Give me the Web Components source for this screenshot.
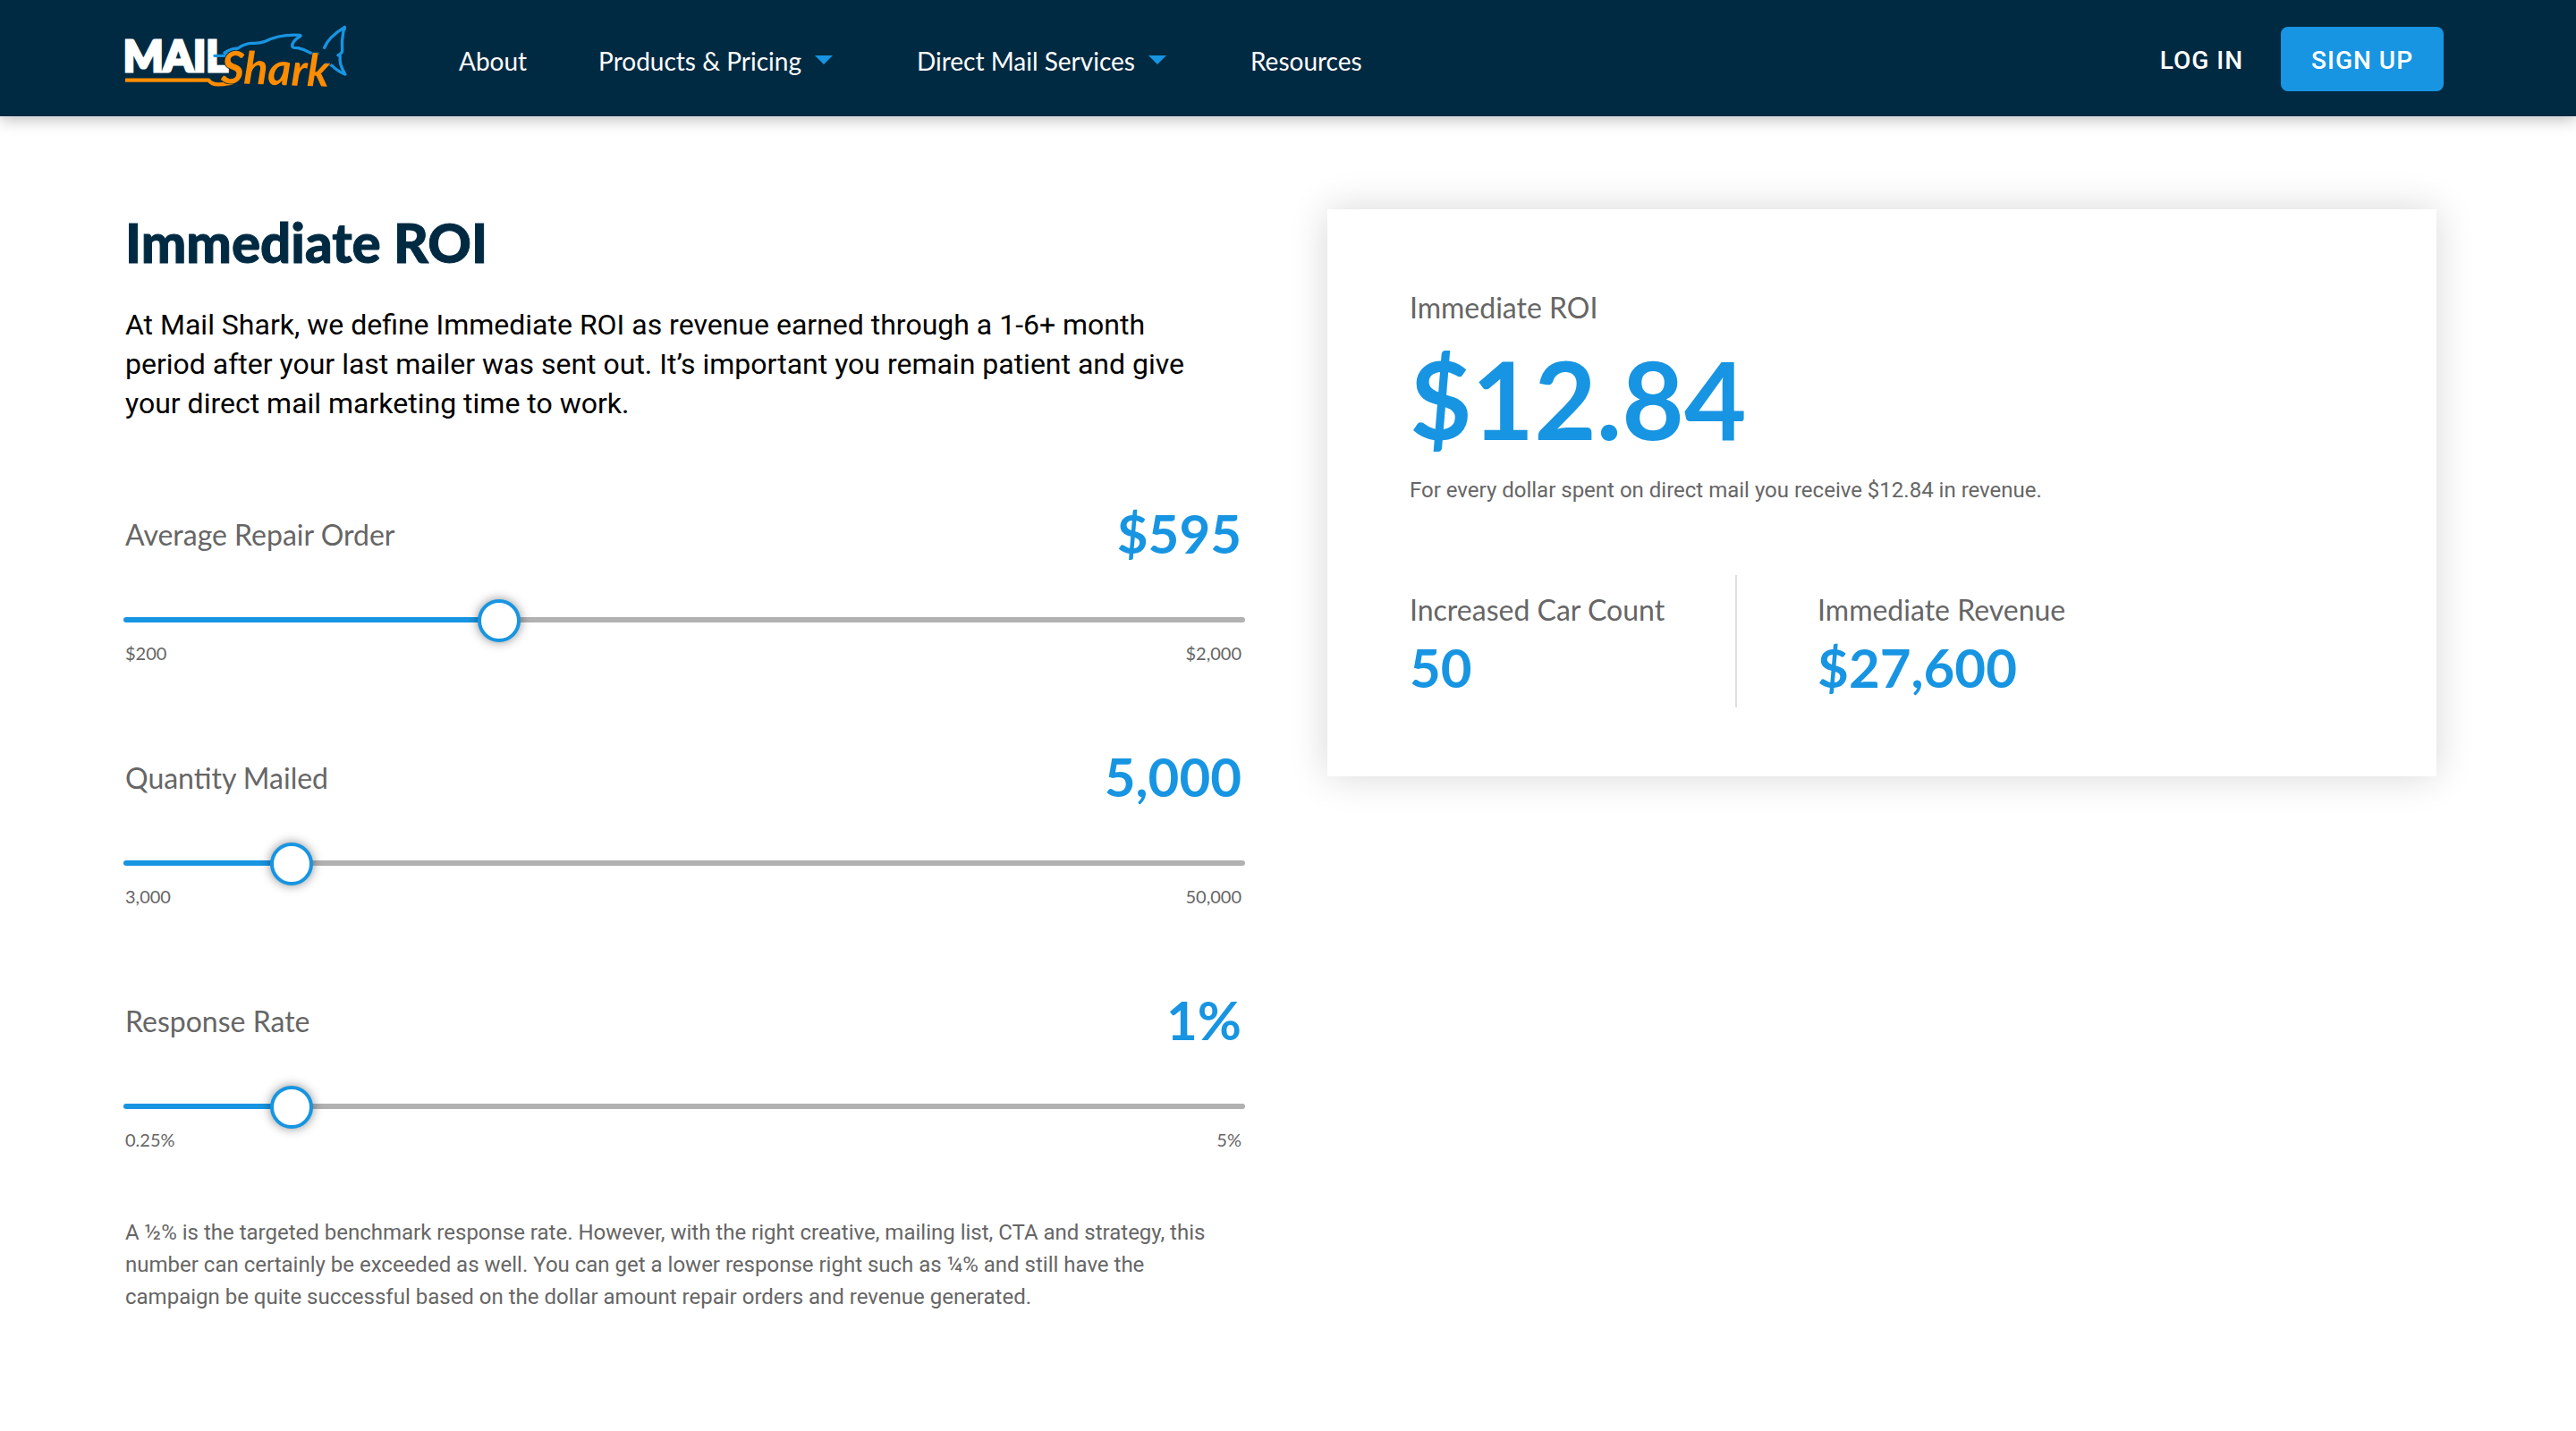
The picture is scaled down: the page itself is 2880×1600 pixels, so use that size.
<!DOCTYPE html>
<html lang="en">
<head>
<meta charset="utf-8">
<title>Immediate ROI | Mail Shark</title>
<style>
  :root {
    --navy: #002a42;
    --blue: #1795e2;
    --grey: #666;
    --rail: #b1b1b1;
    --heading: Lato, sans-serif;
    --black: "Lato Black", Lato, sans-serif;
    --body: Roboto, sans-serif;
  }
  body { margin: 0; background: #fff; font-family: var(--body); }
</style>
</head>
<body>
<roi-page></roi-page>

<template id="t-logo">
  <style>
    :host { display: block; width: 250px; }
    a, svg { display: block; }
    svg { overflow: visible; }
    text { font-family: var(--heading); }
    .mail { font-family: var(--black); }
  </style>
  <a href="#" aria-label="Mail Shark home">
    <svg viewBox="60 50 750 235" fill="none" stroke-linecap="round" stroke-linejoin="round">
      <text class="mail" x="53" y="210" font-size="142" font-weight="900" fill="#fff" stroke="#fff" stroke-width="9" stroke-linejoin="miter">MAIL</text>
      <g stroke="#1795e2" stroke-width="10">
        <path d="M360 156 L388 156 Q400 157 408 151 Q398 149 393 146 Q410 134 438 131 Q462 114 488 114 Q508 115 526 109 Q580 82 646 87 Q652 89 642 94 Q620 108 620 124 Q622 131 640 130 Q662 135 678 145 Q692 151 706 149"/>
        <path d="M728 129 Q742 93 796 60 Q798 66 792 72 Q785 108 788 142 L782 150 L774 154 L781 158 Q776 182 798 218 Q787 216 762 197 Q752 184 733 184 L736 190"/>
      </g>
      <path d="M60 238 H340 Q350 252 372 252 Q400 252 424 244" stroke="#ff8c00" stroke-width="13" stroke-linecap="butt"/>
      <g transform="rotate(2 380 248)" stroke="#002a42" stroke-width="5" paint-order="stroke" fill="#ff8c00" font-style="italic" font-weight="700">
        <text x="380" y="247" font-size="150">Shark</text>
      </g>
    </svg>
  </a>
</template>

<template id="t-nav-item">
  <style>
    :host { display: block; }
    a { display: flex; align-items: center; gap: 15px; color: #fff; text-decoration: none; font: 400 28px/36px var(--heading); white-space: nowrap; }
    svg { display: none; margin: 0 14px 2px 0; }
    :host([menu]) svg { display: block; }
  </style>
  <a href="#"><slot></slot><svg width="20" height="10" viewBox="0 0 20 10" aria-hidden="true"><path d="M0 0H20L10 10Z" fill="#1795e2"/></svg></a>
</template>

<template id="t-action">
  <style>
    :host { display: block; }
    button { display: block; height: 72px; padding: 4px 34px 0; border: 0; border-radius: 8px; background: transparent; color: #fff; font: 500 28px/36px var(--body); letter-spacing: 1px; white-space: nowrap; }
    :host([primary]) button { background: var(--blue); }
    :host(:not([primary])) button { padding: 4px 42px 0; }
  </style>
  <button type="button"><slot></slot></button>
</template>

<template id="t-header">
  <style>
    :host { display: flex; align-items: center; padding: 27px 148px 25px 140px; background: var(--navy); box-shadow: 0 4px 16px rgba(0,0,0,.25); }
    nav { display: flex; gap: 80px; margin-left: 123px; padding-top: 3px; }
    .actions { display: flex; margin-left: auto; }
  </style>
  <shark-logo></shark-logo>
  <nav aria-label="Main">
    <nav-item>About</nav-item>
    <nav-item menu>Products &amp; Pricing</nav-item>
    <nav-item menu>Direct Mail Services</nav-item>
    <nav-item>Resources</nav-item>
  </nav>
  <div class="actions">
    <action-button>LOG IN</action-button>
    <action-button primary>SIGN UP</action-button>
  </div>
</template>

<template id="t-slider">
  <style>
    :host { display: block; color: var(--grey); font-family: var(--heading); }
    .head { display: flex; align-items: center; justify-content: space-between; }
    label { padding-top: 4px; font-size: 32px; line-height: 40px; }
    output { font-size: 60px; line-height: 72px; font-weight: 700; color: var(--blue); }
    .rail { display: flex; margin: 37px -4px 1px -2px; }
    input { -webkit-appearance: none; appearance: none; flex: 1; min-width: 0; height: 48px; margin: 0; background: transparent; }
    input::-webkit-slider-runnable-track { height: 6px; border-radius: 3px; background: linear-gradient(to right, var(--blue) var(--fill), var(--rail) var(--fill)); }
    input::-webkit-slider-thumb { -webkit-appearance: none; box-sizing: border-box; width: 48px; height: 48px; margin-top: -20px; border: 4px solid var(--blue); border-radius: 50%; background: #fff; box-shadow: 0 0 12px rgba(0,0,0,.45); }
    .ends { display: flex; justify-content: space-between; font-size: 20px; line-height: 24px; }
  </style>
  <div class="head"><label for="range"></label><output for="range"></output></div>
  <div class="rail"><input id="range" type="range" min="0" max="1000"></div>
  <div class="ends"><span class="min"></span><span class="max"></span></div>
</template>

<template id="t-stat">
  <style>
    :host { display: block; font-family: var(--heading); }
    .label { font-size: 32px; line-height: 40px; color: var(--grey); }
    .value { margin-top: 8px; font-size: 60px; line-height: 72px; font-weight: 700; color: var(--blue); }
    :host([large]) .value { margin-top: 10px; font-size: 120px; line-height: 144px; }
  </style>
  <div class="label"><slot name="label"></slot></div>
  <div class="value"><slot></slot></div>
</template>

<template id="t-results">
  <style>
    :host { display: block; padding: 90px 92px 77px; background: #fff; box-shadow: 0 0 40px rgba(0,0,0,.16); }
    p { margin: 12px 0 77px; font-size: 24px; line-height: 36px; color: var(--grey); }
    .row { display: flex; }
    .row roi-stat { padding: 19px 79px 9px 0; }
    .row roi-stat + roi-stat { padding: 19px 0 9px 90px; border-left: 2px solid #e0e0e0; }
  </style>
  <roi-stat large><span slot="label">Immediate ROI</span>$12.84</roi-stat>
  <p>For every dollar spent on direct mail you receive $12.84 in revenue.</p>
  <div class="row">
    <roi-stat><span slot="label">Increased Car Count</span>50</roi-stat>
    <roi-stat><span slot="label">Immediate Revenue</span>$27,600</roi-stat>
  </div>
</template>

<template id="t-calculator">
  <style>
    :host { display: block; }
    h1 { margin: 0; padding-top: 1px; font: 900 60px/72px var(--black); color: var(--navy); -webkit-text-stroke: 1px var(--navy); }
    .intro { margin: 34px 0 87px; padding-right: 48px; font-size: 32px; line-height: 44px; color: #000; }
    form { display: flex; flex-direction: column; gap: 90px; }
    .note { margin: 74px 0 0; font-size: 24px; line-height: 36px; color: var(--grey); }
  </style>
  <h1>Immediate ROI</h1>
  <p class="intro">At Mail Shark, we define Immediate ROI as revenue earned through a 1-6+ month period after your last mailer was sent out. It’s important you remain patient and give your direct mail marketing time to work.</p>
  <form>
    <roi-slider label="Average Repair Order" value="$595" min="$200" max="$2,000" position="328"></roi-slider>
    <roi-slider label="Quantity Mailed" value="5,000" min="3,000" max="50,000" position="136"></roi-slider>
    <roi-slider label="Response Rate" value="1%" min="0.25%" max="5%" position="136"></roi-slider>
  </form>
  <p class="note">A ½% is the targeted benchmark response rate. However, with the right creative, mailing list, CTA and strategy, this number can certainly be exceeded as well. You can get a lower response right such as ¼% and still have the campaign be quite successful based on the dollar amount repair orders and revenue generated.</p>
</template>

<template id="t-page">
  <style>
    :host { display: block; }
    main { display: grid; grid-template-columns: 156fr 155fr; gap: 96px; align-items: start; padding: 104px 156px 104px 140px; }
  </style>
  <site-header></site-header>
  <main>
    <roi-calculator></roi-calculator>
    <roi-results></roi-results>
  </main>
</template>

<script>
  class TemplateElement extends HTMLElement {
    constructor() {
      super();
      this.attachShadow({ mode: 'open' })
        .append(document.getElementById(this.constructor.template).content.cloneNode(true));
    }
  }
  const define = (name, template) =>
    customElements.define(name, class extends TemplateElement { static template = template; });

  class RoiSlider extends TemplateElement {
    static template = 't-slider';
    connectedCallback() {
      const $ = s => this.shadowRoot.querySelector(s);
      const input = $('input');
      $('label').textContent = this.getAttribute('label');
      $('output').textContent = this.getAttribute('value');
      $('.min').textContent = this.getAttribute('min');
      $('.max').textContent = this.getAttribute('max');
      input.value = this.getAttribute('position');
      input.setAttribute('aria-valuetext', this.getAttribute('value'));
      const fill = () => {
        const p = input.value / 1000;
        input.style.setProperty('--fill', `calc(24px + (100% - 48px) * ${p})`);
      };
      input.addEventListener('input', fill);
      fill();
    }
  }

  define('shark-logo', 't-logo');
  define('nav-item', 't-nav-item');
  define('action-button', 't-action');
  define('site-header', 't-header');
  customElements.define('roi-slider', RoiSlider);
  define('roi-stat', 't-stat');
  define('roi-results', 't-results');
  define('roi-calculator', 't-calculator');
  define('roi-page', 't-page');
</script>
</body>
</html>
